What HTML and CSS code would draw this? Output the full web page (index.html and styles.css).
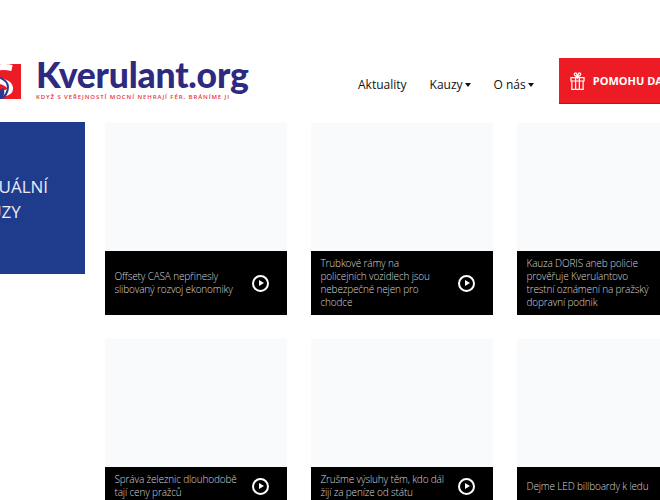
FILE: index.html
```html
<!DOCTYPE html>
<html lang="cs">

<head>
  <meta charset="UTF-8" />
  <title>Kverulant.org</title>
  <link rel="stylesheet" href="styles.css">
</head>

<body>
  <div class="page">
    <!-- Header -->
    <header class="header">
      <a href="#" class="logo">
        <svg class="logo-mark" width="40" height="35" viewBox="0 0 40 35">
          <path d="M0 0H40V35H0Z" fill="#ed1c24" />
          <path d="M31 4C18 1 9 5 10 11C12 18 28 16 29 24C30 30 18 31 8 28" fill="none" stroke="#fff" stroke-width="6" />
          <path d="M0 35V25C7 29 19 27 22 24C24 27 24 32 20 35Z" fill="#2b3a8f" />
          <path d="M17 13C23 15 27 18 27 23C27 28 24 33 20 35" fill="none" stroke="#2b3a8f" stroke-width="2" />
        </svg>
        <span class="logo-text">
          <span class="logo-name">Kverulant.org</span>
          <span class="logo-tagline">KDYŽ S VEŘEJNOSTÍ MOCNÍ NEHRAJÍ FÉR, BRÁNÍME JI</span>
        </span>
      </a>

      <nav class="nav">
        <a href="#">Aktuality</a>
        <a href="#" class="has-caret">Kauzy</a>
        <a href="#" class="has-caret">O nás</a>
      </nav>

      <a href="#" class="donate">
        <svg width="15" height="20" viewBox="0 0 16 20" fill="none" stroke="#fff" stroke-width="1.3">
          <path d="M1 6.5H15V10H1ZM2 10V19H14V10M6 6.5V19M10 6.5V19" />
          <path d="M8 6C6 5 4.5 4 4.5 2.8C4.5 1.2 6.5 1 7 2.2L8 6L9 2.2C9.5 1 11.5 1.2 11.5 2.8C11.5 4 10 5 8 6Z" />
        </svg>
        POMOHU DAROVAT
      </a>
    </header>

    <!-- Content -->
    <main class="content">
      <h2 class="section-title">AKTUÁLNÍ<br>KAUZY</h2>

      <div class="cards">
        <a href="#" class="card">
          <div class="card-image"></div>
          <div class="card-caption">
            <p>Offsety CASA nepřinesly slibovaný rozvoj ekonomiky</p>
            <span class="play"></span>
          </div>
        </a>
        <a href="#" class="card">
          <div class="card-image"></div>
          <div class="card-caption">
            <p>Trubkové rámy na policejních vozidlech jsou nebezpečné nejen pro chodce</p>
            <span class="play"></span>
          </div>
        </a>
        <a href="#" class="card">
          <div class="card-image"></div>
          <div class="card-caption">
            <p>Kauza DORIS aneb policie prověřuje Kverulantovo trestní oznámení na pražský dopravní podnik</p>
            <span class="play"></span>
          </div>
        </a>
        <a href="#" class="card">
          <div class="card-image"></div>
          <div class="card-caption">
            <p>Správa železnic dlouhodobě tají ceny pražců</p>
            <span class="play"></span>
          </div>
        </a>
        <a href="#" class="card">
          <div class="card-image"></div>
          <div class="card-caption">
            <p>Zrušme výsluhy těm, kdo dál žijí za peníze od státu</p>
            <span class="play"></span>
          </div>
        </a>
        <a href="#" class="card">
          <div class="card-image"></div>
          <div class="card-caption">
            <p>Dejme LED billboardy k ledu</p>
            <span class="play"></span>
          </div>
        </a>
      </div>
    </main>
  </div>
</body>

</html>
```

FILE: styles.css
```css
html,
body {
  margin: 0;
  height: 100%;
  overflow: hidden;
  background-color: #fff;
}

body {
  font-family: "Open Sans", Arial, sans-serif;
  color: #111;
}

a {
  text-decoration: none;
  color: inherit;
}

.page {
  width: 800px;
  margin-left: -40px;
}

/* Header */
.header {
  display: flex;
  align-items: flex-start;
  height: 122px;
  padding-left: 21px;
  box-sizing: border-box;
}

.logo {
  display: flex;
  align-items: flex-start;
  gap: 15px;
  margin-top: 57px;
}

.logo-mark {
  margin-top: 7px;
}

.logo-text {
  display: flex;
  flex-direction: column;
  width: 215px;
}

.logo-name {
  font-family: Lato, Arial, sans-serif;
  font-size: 35.5px;
  font-weight: 900;
  line-height: 36px;
  letter-spacing: -0.2px;
  color: #2e2a7f;
}

.logo-tagline {
  font-size: 6px;
  font-weight: 600;
  line-height: 8px;
  letter-spacing: 0.92px;
  color: #e8343a;
  white-space: nowrap;
}

.nav {
  display: flex;
  gap: 23px;
  margin-top: 75px;
  margin-left: 107px;
  font-size: 12px;
  line-height: 20px;
}

.has-caret::after {
  content: "";
  display: inline-block;
  margin-left: 2px;
  vertical-align: 2px;
  border-top: 4px solid #111;
  border-left: 3.5px solid transparent;
  border-right: 3.5px solid transparent;
}

.donate {
  display: flex;
  align-items: center;
  gap: 8px;
  height: 46px;
  margin-top: 58px;
  margin-left: 25px;
  padding: 0 11px;
  box-sizing: border-box;
  background-color: #ed1c24;
  border-bottom: 1px solid #a81a1f;
  color: #fff;
  font-size: 11px;
  font-weight: 700;
  white-space: nowrap;
}

/* Content */
.content {
  display: flex;
  align-items: flex-start;
  gap: 20px;
}

.section-title {
  flex: none;
  width: 125px;
  height: 152px;
  margin: 0;
  padding: 52px 0 0 8px;
  box-sizing: border-box;
  background-color: #1f3c8c;
  color: #e8ecf5;
  font-size: 17px;
  font-weight: 400;
  line-height: 25px;
}

.cards {
  flex: none;
  display: grid;
  grid-template-columns: repeat(3, 182px);
  gap: 24px;
  padding-top: 1px;
}

.card {
  display: flex;
  flex-direction: column;
}

.card-image {
  height: 128px;
  background-color: #f9fafc;
}

.card-caption {
  flex: 1;
  display: flex;
  align-items: center;
  justify-content: space-between;
  padding: 6px 18px 6px 9.5px;
  background-color: #000;
  color: #d4d4d4;
}

.card-caption p {
  width: 124px;
  margin: 0;
  font-size: 10px;
  font-weight: 300;
  line-height: 13px;
  letter-spacing: -0.15px;
}

.play {
  position: relative;
  flex: none;
  width: 13px;
  height: 13px;
  border: 2px solid #fff;
  border-radius: 50%;
}

.play::after {
  content: "";
  position: absolute;
  top: 3.5px;
  left: 5px;
  border-left: 5px solid #fff;
  border-top: 3px solid transparent;
  border-bottom: 3px solid transparent;
}
```
